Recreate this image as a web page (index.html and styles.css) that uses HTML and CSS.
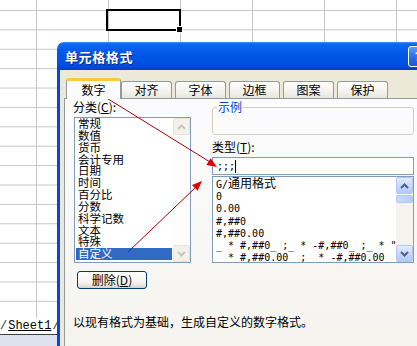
FILE: index.html
```html
<!DOCTYPE html>
<html lang="zh-CN">
<head>
    <meta charset="UTF-8" />
    <title>单元格格式</title>
    <link rel="stylesheet" href="styles.css">
</head>
<body>
    <div class="sheet">
        <div class="cell-sel"><span class="handle"></span></div>
    </div>
    <div class="sheet-bar">
        <span class="tab-edge">/</span><span class="sheet-tab">Sheet1</span><span class="tab-edge">/</span><span class="tab-sep"></span>
    </div>
    <div class="status"></div>

    <div class="dialog">
        <div class="titlebar">
            <span class="title">单元格格式</span>
            <span class="help">?</span>
        </div>
        <div class="dlg-body">
            <div class="tabs">
                <div class="tab active">数字</div>
                <div class="tab">对齐</div>
                <div class="tab">字体</div>
                <div class="tab">边框</div>
                <div class="tab">图案</div>
                <div class="tab">保护</div>
            </div>
            <div class="panel">
                <div class="col-left">
                    <div class="label">分类(<u>C</u>):</div>
                    <div class="listbox cat-list">
                        <ul class="items">
                            <li>常规</li>
                            <li>数值</li>
                            <li>货币</li>
                            <li>会计专用</li>
                            <li>日期</li>
                            <li>时间</li>
                            <li>百分比</li>
                            <li>分数</li>
                            <li>科学记数</li>
                            <li>文本</li>
                            <li>特殊</li>
                            <li class="selected">自定义</li>
                        </ul>
                        <div class="vscroll disabled">
                            <span class="sb-btn"><svg width="9" height="6" viewBox="0 0 9 6"><polyline points="1,5 4.5,1.5 8,5" /></svg></span>
                            <span class="sb-track"></span>
                            <span class="sb-btn"><svg width="9" height="6" viewBox="0 0 9 6"><polyline points="1,1 4.5,4.5 8,1" /></svg></span>
                        </div>
                    </div>
                    <button class="btn">删除(<u>D</u>)</button>
                </div>
                <div class="col-right">
                    <fieldset class="sample">
                        <legend>示例</legend>
                        <div class="sample-body"></div>
                    </fieldset>
                    <div class="label">类型(<u>T</u>):</div>
                    <div class="input"><span class="mono">;;;</span><span class="caret"></span></div>
                    <div class="listbox fmt-list">
                        <ul class="items">
                            <li><span class="mono">G/</span>通用格式</li>
                            <li class="mono">0</li>
                            <li class="mono">0.00</li>
                            <li class="mono">#,##0</li>
                            <li class="mono">#,##0.00</li>
                            <li class="mono">_ * #,##0_ ;_ * -#,##0_ ;_ * "-"_ ;_ @_ </li>
                            <li class="mono">_ * #,##0.00_ ;_ * -#,##0.00_ ;_ * "-"??_ ;_ @_ </li>
                        </ul>
                        <div class="vscroll">
                            <span class="sb-btn"><svg width="9" height="6" viewBox="0 0 9 6"><polyline points="1,5 4.5,1.5 8,5" /></svg></span>
                            <span class="sb-thumb"></span>
                            <span class="sb-track"></span>
                            <span class="sb-btn"><svg width="9" height="6" viewBox="0 0 9 6"><polyline points="1,1 4.5,4.5 8,1" /></svg></span>
                        </div>
                    </div>
                </div>
                <p class="desc">以现有格式为基础，生成自定义的数字格式。</p>
            </div>
        </div>
    </div>

    <svg class="arrows" width="417" height="346" viewBox="0 0 417 346">
        <line x1="105" y1="97" x2="210" y2="162" />
        <polygon points="217,167 206.4,165.1 210.6,158.3" />
        <line x1="128" y1="252" x2="196" y2="187" />
        <polygon points="202,181 197.6,190.8 192,185" />
    </svg>
</body>
</html>
```

FILE: styles.css
```css
body {
    margin: 0;
    width: 417px;
    height: 346px;
    overflow: hidden;
    position: relative;
    background: #fff;
    font-family: "Noto Sans CJK SC", sans-serif;
    font-size: 12px;
    color: #000;
}

/* hoja de cálculo de fondo */
.sheet {
    height: 318px;
    position: relative;
    background-image:
        linear-gradient(90deg, #c6c6c6 1px, transparent 1px),
        linear-gradient(180deg, #c6c6c6 1px, transparent 1px);
    background-size: 72px 100%, 100% 19.4px;
    background-position: 36px 0, 0 10px;
}

.cell-sel {
    position: absolute;
    left: 106px;
    top: 9px;
    width: 75px;
    height: 22px;
    box-sizing: border-box;
    border: 2px solid #000;
}
.cell-sel .handle {
    position: absolute;
    right: -4px;
    bottom: -4px;
    width: 5px;
    height: 5px;
    background: #000;
    border: 1px solid #fff;
}

.sheet-bar {
    height: 16px;
    display: flex;
    align-items: center;
    border-bottom: 1px solid #404040;
    font-family: "Liberation Mono", monospace;
    font-size: 12px;
}
.sheet-tab {
    text-decoration: underline;
    padding: 0 1px;
}
.tab-edge {
    color: #333;
}
.tab-sep {
    width: 1px;
    height: 14px;
    background: #808080;
    margin-left: 2px;
}

.status {
    height: 11px;
    background: #dde3ee;
}

/* ventana de diálogo */
.dialog {
    position: absolute;
    left: 57px;
    top: 42px;
    width: 380px;
    height: 320px;
    display: flex;
    flex-direction: column;
}

.titlebar {
    height: 28px;
    border-radius: 7px 7px 0 0;
    background: linear-gradient(180deg, #3c8cf8 0, #1066ee 2px, #0058e8 40%, #0050e0 80%, #0040c8 100%);
    display: flex;
    align-items: center;
    justify-content: space-between;
    padding: 0 8px 0 8px;
}
.title {
    color: #fff;
    font-weight: bold;
    font-size: 13px;
    text-shadow: 1px 1px 0 #0a2a8a;
    letter-spacing: 0.6px;
}
.help {
    width: 21px;
    height: 21px;
    box-sizing: border-box;
    border: 1px solid #fff;
    border-radius: 3px;
    background: linear-gradient(180deg, #5a9bff, #2468e8 60%, #1a5ad8);
    color: #fff;
    font-family: "DejaVu Sans", sans-serif;
    font-weight: bold;
    font-size: 13px;
    display: flex;
    align-items: center;
    justify-content: center;
}

.dlg-body {
    flex: 1;
    background: #ece9d8;
    border-left: 3px solid #0a46d6;
    padding: 8px 0 0 4px;
    display: flex;
    flex-direction: column;
}

.tabs {
    height: 20px;
    display: flex;
    align-items: flex-end;
    padding-left: 2px;
}
.tab {
    width: 51px;
    height: 17px;
    box-sizing: border-box;
    margin-left: 3px;
    border: 1px solid #919b9c;
    border-bottom: none;
    border-radius: 3px 3px 0 0;
    background: linear-gradient(180deg, #fff, #f3f2ee 60%, #e6e5de);
    text-align: center;
    line-height: 15px;
}
.tab.active {
    width: 55px;
    height: 21px;
    margin-left: 0;
    margin-bottom: -1px;
    position: relative;
    z-index: 1;
    background: #fcfcfe;
    border-top: 3px solid #ffc83c;
    line-height: 17px;
}
.tab.active + .tab {
    margin-left: 0;
}

.panel {
    flex: 1;
    border: 1px solid #919b9c;
    background: linear-gradient(180deg, #fcfcfe, #f4f3ee);
    padding-left: 9px;
    display: grid;
    grid-template-columns: 117px 202px;
    column-gap: 21px;
    align-content: start;
}

.label {
    line-height: 14px;
}
.label u,
.btn u {
    text-decoration: underline;
}

.col-left .label {
    margin: 1px 0 0 -1px;
}

.listbox {
    border: 1px solid #7f9db9;
    background: #fff;
    display: flex;
    overflow: hidden;
}
.items {
    list-style: none;
    margin: 0;
    padding: 0 1px;
    flex: 1;
    min-width: 0;
}
.items li {
    white-space: pre;
}

.cat-list {
    margin-top: 3px;
    height: 146px;
    box-sizing: border-box;
}
.cat-list li {
    font-size: 11.5px;
    line-height: 11.85px;
    padding-left: 2px;
}
.cat-list li.selected {
    background: #316ac5;
    color: #fff;
}

.vscroll {
    width: 17px;
    flex: none;
    display: flex;
    flex-direction: column;
    background: #f4f3ee;
}
.sb-btn {
    height: 17px;
    box-sizing: border-box;
    border: 1px solid #b4c8f6;
    border-radius: 2px;
    background: linear-gradient(180deg, #e3ecfe, #c3d5fd 60%, #b4c9f8);
    display: flex;
    align-items: center;
    justify-content: center;
}
.sb-btn svg polyline {
    fill: none;
    stroke: #4d6185;
    stroke-width: 2;
}
.sb-track {
    flex: 1;
}
.sb-thumb {
    height: 8px;
    box-sizing: border-box;
    border: 1px solid #b4c8f6;
    border-radius: 2px;
    background: linear-gradient(90deg, #c9d8fc, #b8cbf8);
    margin-top: 1px;
}
.vscroll.disabled {
    background: #fcfcfa;
}
.vscroll.disabled .sb-btn {
    border-color: #e6e4da;
    background: #f2f1ea;
}
.vscroll.disabled .sb-btn svg polyline {
    stroke: #c9c7ba;
}

.btn {
    margin: 8px 0 0 3px;
    width: 70px;
    height: 18px;
    padding: 0;
    border: 1px solid #003c74;
    border-radius: 3px;
    background: linear-gradient(180deg, #fff, #f3f2ec 70%, #d8d3c6);
    font-family: "Noto Sans CJK SC", sans-serif;
    font-size: 12px;
    line-height: 14px;
    color: #000;
}

.sample {
    margin: 2px 0 0 0;
    padding: 0;
    border: 1px solid #d0d0bf;
    border-radius: 3px;
}
.sample legend {
    margin-left: 4px;
    padding: 0 1px;
    color: #0046d5;
    line-height: 12px;
}
.sample-body {
    height: 21px;
}

.col-right .label {
    margin-top: 5px;
}

.mono {
    font-family: "DejaVu Sans Mono", monospace;
    font-size: 10px;
}

.input {
    margin-top: 3px;
    height: 18px;
    box-sizing: border-box;
    border: 1px solid #7f9db9;
    background: #fff;
    padding-left: 4px;
    display: flex;
    align-items: center;
}
.caret {
    width: 1px;
    height: 13px;
    background: #000;
}

.fmt-list {
    margin-top: 1px;
    height: 87px;
    box-sizing: border-box;
}
.fmt-list .items {
    padding-left: 3px;
    overflow: hidden;
}
.fmt-list li {
    line-height: 12.2px;
}
.fmt-list li.mono,
.fmt-list li .mono {
    font-size: 10px;
}

.desc {
    grid-column: 1 / 3;
    margin: 26px 0 0 -1px;
    line-height: 14px;
}

/* flechas rojas dibujadas encima */
.arrows {
    position: absolute;
    left: 0;
    top: 0;
    pointer-events: none;
}
.arrows line {
    stroke: #b00000;
    stroke-width: 1;
}
.arrows polygon {
    fill: #e00000;
}
```
